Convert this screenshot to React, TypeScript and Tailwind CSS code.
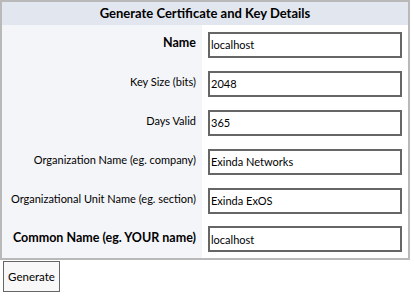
import React from 'react';

type Field = {
  label: string;
  value: string;
  bold?: boolean;
};

const fields: Field[] = [
  { label: 'Name', value: 'localhost', bold: true },
  { label: 'Key Size (bits)', value: '2048' },
  { label: 'Days Valid', value: '365' },
  { label: 'Organization Name (eg. company)', value: 'Exinda Networks' },
  { label: 'Organizational Unit Name (eg. section)', value: 'Exinda ExOS' },
  { label: 'Common Name (eg. YOUR name)', value: 'localhost', bold: true },
];

export default function App() {
  return (
    <div className="w-[414px] h-[297px] bg-white text-[11px] text-black" style={{ fontFamily: 'Lato, "Liberation Sans", sans-serif' }}>
      <table className="w-[410px] table-fixed border-2 border-[#b9b9b9] border-collapse">
        <colgroup>
          <col className="w-[201px]" />
          <col />
        </colgroup>
        <thead>
          <tr>
            <th colSpan={2} className="h-[24px] bg-[#e2e6ee] font-bold text-[13px] text-center">
              Generate Certificate and Key Details
            </th>
          </tr>
        </thead>
        <tbody>
          {fields.map((f) => (
            <tr key={f.label} className="h-[39px]">
              <td className={`bg-[#f4f5f9] text-right pr-[6px] whitespace-nowrap pb-[2px] ${f.bold ? 'font-bold text-[12.5px]' : 'text-[11px]'}`}>
                {f.label}
              </td>
              <td className="pl-[6px] pr-[6px]">
                <input
                  type="text"
                  defaultValue={f.value}
                  className="w-[194px] h-[26px] border-2 border-[#666] px-[1px] text-[11px] outline-none"
                />
              </td>
            </tr>
          ))}
        </tbody>
      </table>
      <button className="ml-[3px] mt-[1px] w-[57px] h-[31px] border border-[#666] bg-[#f8f8f8] text-[11.5px]">
        Generate
      </button>
    </div>
  );
}
